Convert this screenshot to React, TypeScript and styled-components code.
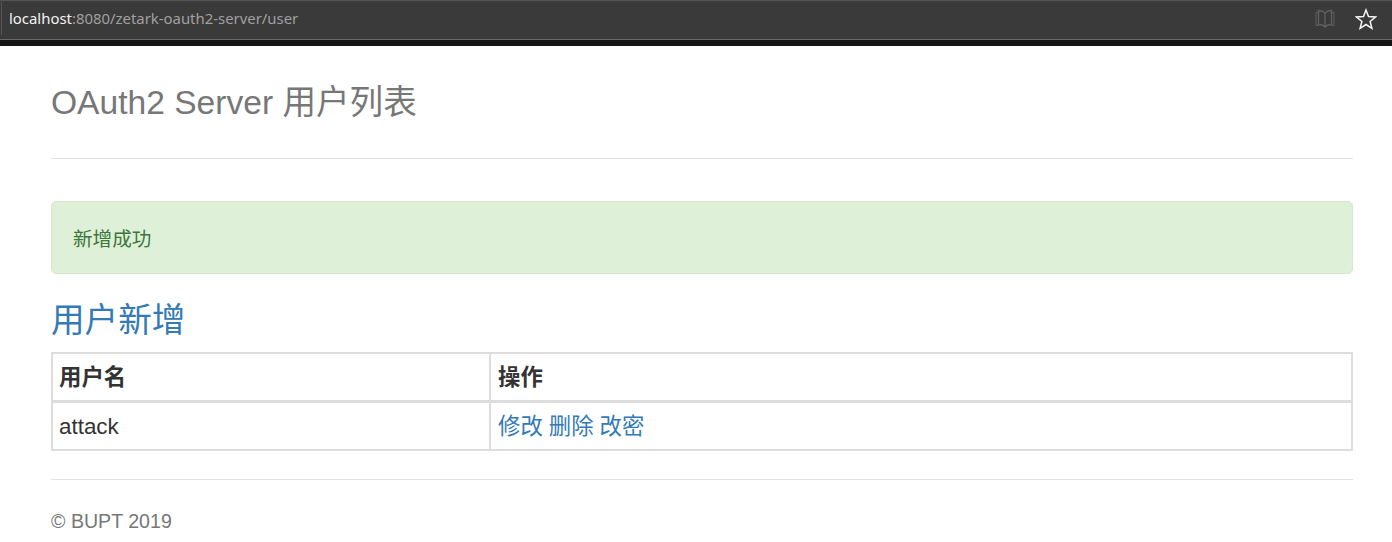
import React from 'react';
import styled, { createGlobalStyle } from 'styled-components';

const GlobalStyle = createGlobalStyle`
  html, body {
    margin: 0;
    padding: 0;
    background: #fff;
  }
  body {
    font-family: "Liberation Sans", "Noto Sans CJK SC", sans-serif;
    color: #333;
  }
  * {
    box-sizing: border-box;
  }
`;

const BrowserBar = styled.div`
  height: 46px;
  background: #3a3a3a;
  border-top: 1px solid #555;
  border-bottom: 6px solid #141414;
  display: flex;
  align-items: center;
  justify-content: space-between;
  padding: 0 15px 4px 1px;
  box-shadow: inset 0 -1px 0 #6a6a6a;
`;

const AddressBox = styled.div`
  height: 33px;
  border-left: 1px solid #565656;
  padding: 0 0 2px 7px;
  display: flex;
  align-items: center;
  font-family: "Noto Sans", "Noto Sans CJK SC", sans-serif;
  font-size: 14.9px;
  color: #a0a0a0;
`;

const Host = styled.span`
  color: #f2f2f2;
`;

const BarIcons = styled.div`
  display: flex;
  align-items: center;
  gap: 20px;
`;

const Page = styled.main`
  padding: 0 39px 0 51px;
`;

const PageHeader = styled.header`
  height: 113px;
  border-bottom: 1px solid #e2e2e2;
  padding-top: 34px;
`;

const PageTitle = styled.h1`
  margin: 0;
  font-size: 33.6px;
  font-weight: 400;
  line-height: 46px;
  color: #777;
`;

const Alert = styled.div`
  margin-top: 42px;
  height: 73px;
  padding: 0 21px;
  display: flex;
  align-items: center;
  background: #dff0d8;
  border: 1px solid #d6e9c6;
  border-radius: 5px;
  color: #3c763d;
  font-size: 19.6px;
`;

const SectionLink = styled.a`
  display: block;
  margin-top: 24px;
  font-size: 33.6px;
  line-height: 46px;
  color: #337ab7;
  text-decoration: none;
`;

const UserTable = styled.table`
  width: 100%;
  margin-top: 8px;
  border-collapse: collapse;
  table-layout: fixed;
  font-size: 22.4px;
  line-height: 30px;
`;

const HeadCell = styled.th<{ $width?: string }>`
  width: ${(p) => p.$width || 'auto'};
  height: 48px;
  padding: 3px 6px 0;
  text-align: left;
  font-weight: 700;
  border: 2px solid #ddd;
  border-bottom-width: 3px;
  &:nth-child(2) {
    padding-left: 7px;
  }
`;

const Cell = styled.td`
  height: 49px;
  padding: 2px 6px 0;
  border: 2px solid #ddd;
  &:nth-child(2) {
    padding-left: 7px;
  }
`;

const ActionLink = styled.a`
  color: #337ab7;
  text-decoration: none;
  margin-right: 6px;
`;

const Footer = styled.footer`
  margin-top: 28px;
  border-top: 1px solid #e2e2e2;
  padding-top: 29px;
  font-size: 19.6px;
  line-height: 24px;
  color: #777;
`;

const BookIcon: React.FC = () => (
  <svg width="20" height="20" viewBox="0 0 20 20" fill="none" stroke="#5f5f5f" strokeWidth="1.4">
    <path d="M1 3.500h2.500v13H1zM16.500 3.500H19v13h-2.500z" strokeWidth="1" />
    <path d="M10 4.500C8.500 2 5.500 1.500 3.500 1.500v14c2.500 0 5 .5 6.500 2.500 1.500-2 4-2.500 6.500-2.500v-14c-2 0-5 .5-6.500 3z" />
    <path d="M10 4.500V18" />
  </svg>
);

const StarIcon: React.FC = () => (
  <svg width="22" height="22" viewBox="0 0 22 22" fill="none" stroke="#f4f4f4" strokeWidth="1.5">
    <path d="M11 2l2.500 6.600 7 .4-5.400 4.500 1.800 6.800L11 16.500 5.100 20.300l1.800-6.800L1.500 9l7-.4z" />
  </svg>
);

const App: React.FC = () => {
  return (
    <>
      <GlobalStyle />
      <BrowserBar>
        <AddressBox>
          <Host>localhost</Host>:8080/zetark-oauth2-server/user
        </AddressBox>
        <BarIcons>
          <BookIcon />
          <StarIcon />
        </BarIcons>
      </BrowserBar>
      <Page>
        <PageHeader>
          <PageTitle>OAuth2 Server 用户列表</PageTitle>
        </PageHeader>
        <Alert>新增成功</Alert>
        <SectionLink href="#">用户新增</SectionLink>
        <UserTable>
          <thead>
            <tr>
              <HeadCell $width="438px">用户名</HeadCell>
              <HeadCell>操作</HeadCell>
            </tr>
          </thead>
          <tbody>
            <tr>
              <Cell>attack</Cell>
              <Cell>
                <ActionLink href="#">修改</ActionLink>
                <ActionLink href="#">删除</ActionLink>
                <ActionLink href="#">改密</ActionLink>
              </Cell>
            </tr>
          </tbody>
        </UserTable>
        <Footer>© BUPT 2019</Footer>
      </Page>
    </>
  );
};

export default App;
